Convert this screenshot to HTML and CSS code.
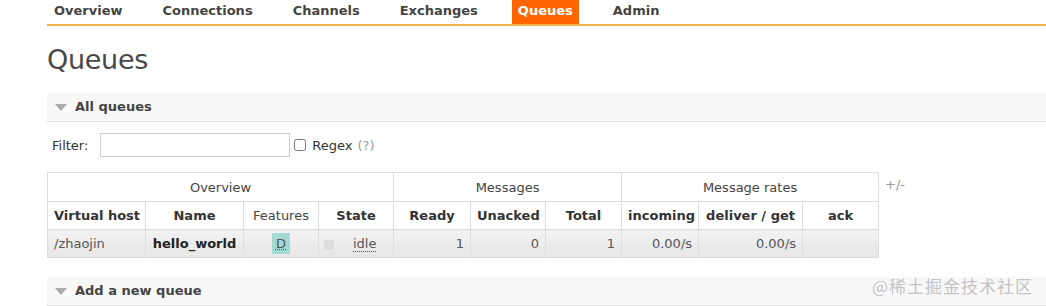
FILE: index.html
```html
<!DOCTYPE html>
<html lang="en">
	<head>
		<meta charset="UTF-8" />
		<title>RabbitMQ Management - Queues</title>
		<link rel="stylesheet" href="styles.css">
	</head>
	<body>
		<div class="main">
			<ul class="menu">
				<li>Overview</li>
				<li>Connections</li>
				<li>Channels</li>
				<li>Exchanges</li>
				<li class="selected">Queues</li>
				<li>Admin</li>
			</ul>

			<h1>Queues</h1>

			<div class="section">
				<h2><span class="arrow"></span>All queues</h2>
				<div class="filter">
					<label for="filter">Filter:</label>
					<input type="text" id="filter" />
					<input type="checkbox" id="regex" />
					<label for="regex">Regex</label>
					<span class="help">(?)</span>
				</div>
				<div class="table-wrap">
					<table class="list">
						<colgroup>
							<col style="width: 98px" />
							<col style="width: 98px" />
							<col style="width: 75px" />
							<col style="width: 75px" />
							<col style="width: 77px" />
							<col style="width: 75px" />
							<col style="width: 76px" />
							<col style="width: 77px" />
							<col style="width: 104px" />
							<col style="width: 76px" />
						</colgroup>
						<thead>
							<tr class="group">
								<th colspan="4">Overview</th>
								<th colspan="3" class="split">Messages</th>
								<th colspan="3" class="split">Message rates</th>
							</tr>
							<tr>
								<th>Virtual host</th>
								<th>Name</th>
								<th class="plain">Features</th>
								<th>State</th>
								<th class="split">Ready</th>
								<th>Unacked</th>
								<th>Total</th>
								<th class="split">incoming</th>
								<th>deliver / get</th>
								<th>ack</th>
							</tr>
						</thead>
						<tbody>
							<tr>
								<td class="left">/zhaojin</td>
								<td class="name">hello_world</td>
								<td class="center"><abbr class="durable">D</abbr></td>
								<td><span class="state-box"></span><abbr class="state">idle</abbr></td>
								<td class="r split">1</td>
								<td class="r">0</td>
								<td class="r">1</td>
								<td class="r split">0.00/s</td>
								<td class="r">0.00/s</td>
								<td class="r"></td>
							</tr>
						</tbody>
					</table>
					<span class="toggle">+/-</span>
				</div>
			</div>

			<div class="section">
				<h2><span class="arrow"></span>Add a new queue</h2>
			</div>
		</div>
		<div class="watermark">@稀土掘金技术社区</div>
	</body>
</html>
```

FILE: styles.css
```css
body {
	font-family: "DejaVu Sans", Verdana, sans-serif;
	font-size: 13px;
	color: #444;
	background-color: #fff;
	margin: 0;
}
.main {
	margin-left: 47px;
}
.menu {
	list-style-type: none;
	margin: 0;
	padding: 0 0 0 1px;
	display: flex;
	gap: 28px;
	height: 24px;
	border-bottom: 2px solid #edb44e;
}
.menu li {
	font-weight: bold;
	padding: 0 6px;
	line-height: 22px;
	height: 24px;
	color: #444;
}
.menu li.selected {
	background-color: #ff6600;
	color: #fff;
}
h1 {
	font-size: 27px;
	font-weight: normal;
	color: #484848;
	margin: 17px 0 0;
	line-height: 34px;
	letter-spacing: -0.3px;
}
.section h2 {
	font-size: 13px;
	font-weight: bold;
	color: #444;
	background-color: #f8f8f8;
	border-bottom: 1px solid #e2e2e2;
	margin: 0;
	height: 28px;
	line-height: 28px;
	padding-left: 8px;
	display: flex;
	align-items: center;
}
.section:first-of-type h2 {
	margin-top: 16px;
}
.arrow {
	width: 0;
	height: 0;
	border-left: 6px solid transparent;
	border-right: 6px solid transparent;
	border-top: 7px solid #aaa;
	margin-right: 8px;
}
.filter {
	display: flex;
	align-items: center;
	margin: 11px 0 0 5px;
	height: 24px;
}
.filter label {
	color: #333;
}
.filter input[type="text"] {
	width: 190px;
	height: 24px;
	box-sizing: border-box;
	border: 1px solid #ccc;
	margin: 0 4px 0 12px;
	padding: 2px;
}
.filter input[type="checkbox"] {
	width: 12px;
	height: 12px;
	margin: 0 6px 0 0;
}
.help {
	color: #999;
	margin-left: 5px;
}
.table-wrap {
	display: flex;
	align-items: flex-start;
	margin-top: 15px;
}
.list {
	border-collapse: collapse;
	table-layout: fixed;
	width: 831px;
	border: 1px solid #ddd;
}
.list th,
.list td {
	border: 1px solid #ddd;
	padding: 0 6px;
	white-space: nowrap;
	overflow: hidden;
}
.list th {
	background-color: #fff;
	font-weight: bold;
	height: 27px;
	text-align: center;
	color: #333;
}
.list tr.group th {
	font-weight: normal;
	color: #444;
	height: 28px;
}
.list th.plain {
	font-weight: normal;
	color: #444;
}
.list .split {
	border-left: 1px solid #c8c8c8;
}
.list td {
	height: 27px;
	color: #555;
	background: linear-gradient(#f2f2f2, #e6e6e6);
}
.list td.left {
	text-align: left;
}
.list td.name {
	font-weight: bold;
	color: #222;
	text-align: center;
}
.list td.center {
	text-align: center;
}
.list td.r {
	text-align: right;
}
.durable {
	display: inline-block;
	background-color: #a3dbd3;
	color: #555;
	padding: 2px 4px;
	line-height: 17px;
	text-decoration: underline dotted;
}
.state-box {
	display: inline-block;
	width: 10px;
	height: 10px;
	background-color: #ddd;
	vertical-align: middle;
	margin: 0 19px 0 -1px;
}
.state {
	text-decoration: none;
	border-bottom: 1px dotted #555;
	color: #555;
}
.toggle {
	color: #999;
	margin: 5px 0 0 6px;
}
.section + .section h2 {
	margin-top: 19px;
}
.watermark {
	position: absolute;
	left: 872px;
	top: 273px;
	font-family: "Noto Sans CJK SC", sans-serif;
	font-size: 17px;
	color: #c4c4c4;
	letter-spacing: 1px;
}
```
